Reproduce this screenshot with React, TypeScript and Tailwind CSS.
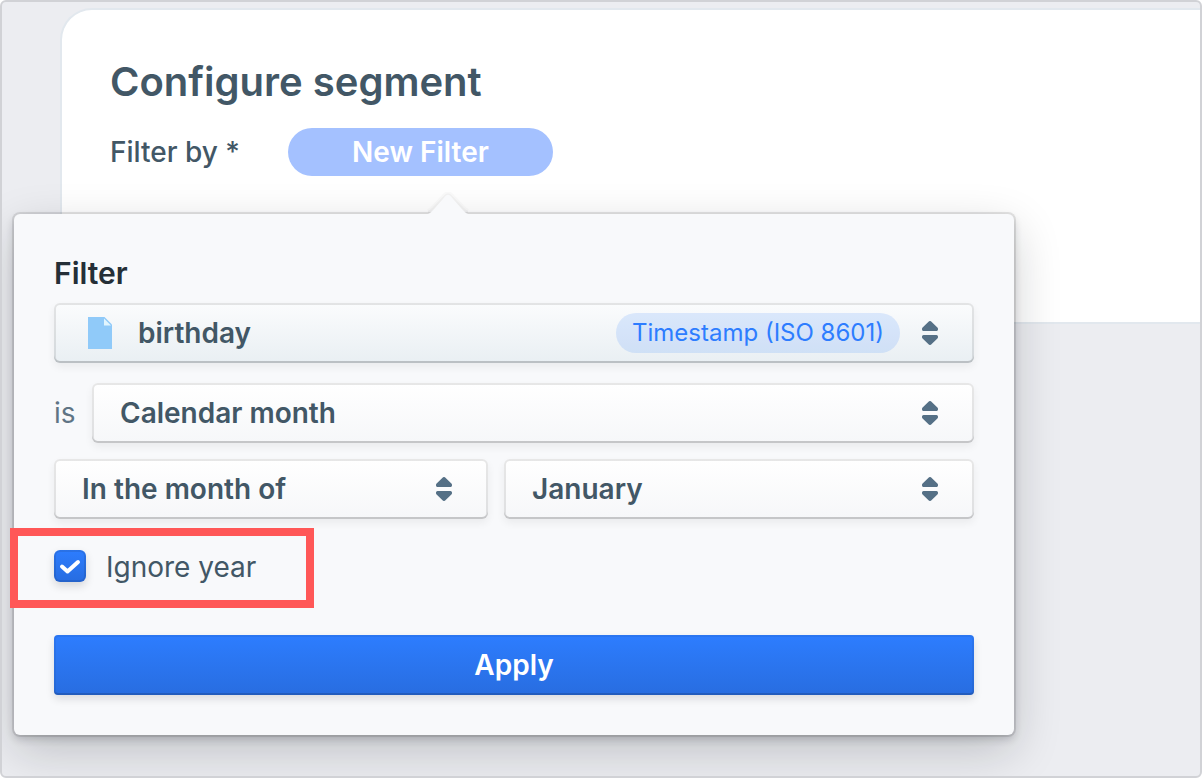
import React from 'react';

const selectShadow =
  'shadow-[inset_0_0_0_2px_rgba(17,20,24,0.1),inset_0_-2px_0_rgba(17,20,24,0.12),0_4px_8px_rgba(17,20,24,0.06)]';

const CaretIcon: React.FC = () => (
  <svg
    viewBox="0 0 16 24"
    className="pointer-events-none absolute top-1/2 right-9 h-6 w-4 -translate-y-1/2 fill-[#557086]"
    aria-hidden="true"
  >
    <path d="M6.800.5a1.800 1.800 0 0 1 2.400 0l6.200 6c1.100 1 .7 3.500-.9 3.500h-13C-.1 10-.5 7.500.6 6.500z" />
    <path d="M6.800 23.500a1.800 1.800 0 0 0 2.400 0l6.200-6c1.100-1 .7-3.500-.9-3.500h-13c-1.600 0-2 2.500-.9 3.500z" />
  </svg>
);

const DocumentIcon: React.FC = () => (
  <svg
    viewBox="0 0 24 32"
    className="pointer-events-none absolute top-1/2 left-[34px] h-8 w-6 -translate-y-1/2"
    aria-hidden="true"
  >
    <path d="M0 0h16.500L24 7.500V32H0z" fill="#90caf9" />
    <path d="M16 1.500V8.500h7z" fill="#e1f5fe" />
  </svg>
);

const PopoverArrow: React.FC = () => (
  <svg viewBox="0 0 56 24" className="absolute -top-[22px] left-[406px] h-6 w-14" aria-hidden="true">
    <g fill="none" stroke="#111418" strokeLinejoin="round">
      <path d="M8 20c2-.5 3-1.500 5-3.500L25.500 3.500c1.500-1.700 3.500-1.700 5 0L43 16.500c2 2 3 3 5 3.500" strokeWidth="6" opacity=".02" />
      <path d="M8 20c2-.5 3-1.500 5-3.500L25.500 3.500c1.500-1.700 3.500-1.700 5 0L43 16.500c2 2 3 3 5 3.500" strokeWidth="2" opacity=".03" />
    </g>
    <path d="M4 24v-1.500c4 0 6.500-1.500 9-4L25.500 4c1.500-1.700 3.500-1.700 5 0L43 18.500c2.500 2.500 5 4 9 4V24z" fill="#f8f9fb" />
  </svg>
);

interface SelectBoxProps {
  label: string;
  options: string[];
  className?: string;
}

const SelectBox: React.FC<SelectBoxProps> = ({ label, options, className = '' }) => (
  <div className={`relative ${className}`}>
    <select
      aria-label={label}
      className={`h-[60px] w-full appearance-none rounded-md bg-linear-to-b from-white to-[#f6f7f9] pr-16 pl-7 text-[28px] font-semibold text-[#425766] ${selectShadow}`}
    >
      {options.map((option) => (
        <option key={option}>{option}</option>
      ))}
    </select>
    <CaretIcon />
  </div>
);

const FilterPopover: React.FC = () => (
  <div
    role="dialog"
    aria-label="Filter"
    className="absolute top-[212px] left-3 w-[1000px] rounded-md bg-[#f8f9fb] px-10 pt-10 pb-10 shadow-[0_0_0_2px_rgba(17,20,24,0.1),0_4px_8px_rgba(17,20,24,0.2),0_16px_48px_rgba(17,20,24,0.2)]"
  >
    <PopoverArrow />

    <h2 className="mb-[11px] text-[30px] leading-[38px] font-semibold text-[#252f37]">Filter</h2>

    <div className="relative">
      <select
        aria-label="Property"
        className={`h-[60px] w-full appearance-none rounded-md bg-linear-to-b from-[#fbfcfd] to-[#e9eff3] pr-96 pl-[84px] text-[28px] font-semibold text-[#425766] ${selectShadow}`}
      >
        <option>birthday</option>
      </select>
      <DocumentIcon />
      <span className="pointer-events-none absolute top-[10px] right-[74px] rounded-full bg-[#2d7dff]/15 px-4 text-2xl leading-10 text-[#2d7dff]">
        Timestamp (ISO 8601)
      </span>
      <CaretIcon />
    </div>

    <div className="mt-5 flex items-center">
      <span className="w-[38px] text-[28px] text-[#5f7485]">is</span>
      <SelectBox label="Condition" options={['Calendar month']} className="flex-1" />
    </div>

    <div className="mt-4 flex gap-4">
      <SelectBox label="Month match" options={['In the month of']} className="w-[434px]" />
      <SelectBox label="Month" options={['January']} className="flex-1" />
    </div>

    <div className="relative mt-[31px] flex h-8 items-start">
      <input
        id="ignore-year"
        type="checkbox"
        defaultChecked
        className="peer h-8 w-8 appearance-none rounded-md bg-white shadow-[inset_0_0_0_2px_rgba(17,20,24,0.1),0_4px_8px_rgba(17,20,24,0.15)] checked:bg-linear-to-b checked:from-[#2d7dff] checked:to-[#276ce0]"
      />
      <svg
        viewBox="0 0 32 32"
        className="pointer-events-none absolute left-0 hidden h-8 w-8 peer-checked:block"
        aria-hidden="true"
      >
        <path
          d="M8 16.500l5.500 5L24 12"
          fill="none"
          stroke="white"
          strokeWidth="4"
          strokeLinecap="round"
          strokeLinejoin="round"
        />
      </svg>
      <label htmlFor="ignore-year" className="ml-5 text-[28px] leading-[34px] text-[#425766]">
        Ignore year
      </label>
      <div className="pointer-events-none absolute -top-[22px] -left-11 h-20 w-[304px] border-8 border-[#ff5757]" />
    </div>

    <button
      type="button"
      className="mt-[53px] h-[60px] w-full rounded-sm bg-linear-to-b from-[#2d7dff] to-[#286de0] text-[28px] font-semibold text-white shadow-[inset_0_0_0_2px_rgba(17,20,24,0.06),inset_0_-2px_0_rgba(17,20,24,0.12),0_4px_8px_rgba(17,20,24,0.12)]"
    >
      Apply
    </button>
  </div>
);

const App: React.FC = () => {
  return (
    <main className="relative min-h-screen overflow-hidden rounded-md border-2 border-[#d1d2d6] bg-[#ecedf1] pt-1.5 pl-[58px] font-['Inter',sans-serif]">
      <section className="rounded-tl-[32px] border-2 border-r-0 border-[#e2e8ee] bg-white px-12 pt-12 pb-[146px]">
        <h1 className="mb-[22px] text-[40px] leading-12 font-semibold text-[#425766]">Configure segment</h1>
        <div className="flex items-center">
          <span className="w-[178px] text-[28px] font-medium text-[#425766]">Filter by *</span>
          <button
            type="button"
            className="h-12 w-[265px] rounded-full bg-[#a4c1ff] text-[28px] font-semibold text-white"
          >
            New Filter
          </button>
        </div>
      </section>

      <FilterPopover />
    </main>
  );
};

export default App;
